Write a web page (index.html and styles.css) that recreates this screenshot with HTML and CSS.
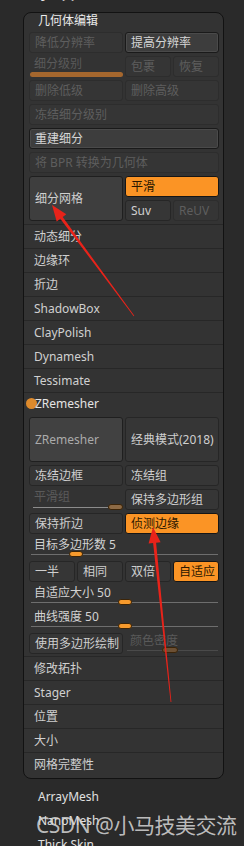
FILE: index.html
```html
<!DOCTYPE html>
<html lang="zh">
<head>
  <meta charset="UTF-8" />
  <meta name="viewport" content="width=device-width, initial-scale=1" />
  <title>几何体编辑</title>
  <link rel="stylesheet" href="styles.css">
</head>
<body>
  <div class="cut-title">子工具</div>

  <div class="panel">
    <div class="panel-title">几何体编辑</div>

    <div class="grid">
      <div class="btn off span2">降低分辨率</div>
      <div class="btn on span2">提高分辨率</div>

      <div class="slider span2">
        <span class="label off-text">细分级别</span>
        <div class="fill-bar"></div>
      </div>
      <div class="btn off">包裹</div>
      <div class="btn off">恢复</div>

      <div class="btn off span2">删除低级</div>
      <div class="btn off span2">删除高级</div>

      <div class="btn off span4">冻结细分级别</div>
      <div class="btn on span4">重建细分</div>
      <div class="btn off span4">将 BPR 转换为几何体</div>

      <div class="btn big span2">细分网格</div>
      <div class="btn orange span2">平滑</div>
      <div class="btn plain">Suv</div>
      <div class="btn off">ReUV</div>
    </div>

    <ul class="list first">
      <li>动态细分</li>
      <li>边缘环</li>
      <li>折边</li>
      <li>ShadowBox</li>
      <li>ClayPolish</li>
      <li>Dynamesh</li>
      <li>Tessimate</li>
      <li class="sub-head"><span class="dot"></span>ZRemesher</li>
    </ul>

    <div class="grid zr">
      <div class="btn big dim span2">ZRemesher</div>
      <div class="btn plain big-r span2">经典模式(2018)</div>

      <div class="btn plain span2">冻结边框</div>
      <div class="btn plain span2">冻结组</div>

      <div class="slider span2">
        <span class="label off-text">平滑组</span>
        <div class="track short"><div class="knob dull" style="left: 100%"></div></div>
      </div>
      <div class="btn plain span2">保持多边形组</div>

      <div class="btn plain span2">保持折边</div>
      <div class="btn orange span2">侦测边缘</div>

      <div class="slider span4">
        <span class="label">目标多边形数 5</span>
        <div class="track"><div class="knob" style="left: 24%"></div></div>
      </div>

      <div class="btn plain">一半</div>
      <div class="btn plain">相同</div>
      <div class="btn plain">双倍</div>
      <div class="btn orange">自适应</div>

      <div class="slider span4">
        <span class="label">自适应大小 50</span>
        <div class="track"><div class="knob" style="left: 50%"></div></div>
      </div>
      <div class="slider span4">
        <span class="label">曲线强度 50</span>
        <div class="track"><div class="knob" style="left: 50%"></div></div>
      </div>

      <div class="btn plain span2">使用多边形绘制</div>
      <div class="slider span2">
        <span class="label off-text">颜色密度</span>
        <div class="track dark"><div class="knob dark" style="left: 47%"></div></div>
      </div>
    </div>

    <ul class="list last">
      <li>修改拓扑</li>
      <li>Stager</li>
      <li>位置</li>
      <li>大小</li>
      <li>网格完整性</li>
    </ul>
  </div>

  <ul class="outside">
    <li>ArrayMesh</li>
    <li>NanoMesh</li>
    <li>Thick Skin</li>
  </ul>

  <div class="watermark">CSDN @小马技美交流</div>

  <svg class="arrows" width="244" height="846" viewBox="0 0 244 846">
    <polygon fill="#e8231a" points="52,205 56.7,221.4 60.3,218.8 133.7,316.2 134.3,315.8 62.7,217 66.3,214.3" />
    <polygon fill="#e8231a" points="153,527 148.6,543.5 153.1,543.1 170.6,702 171.4,702 156.1,542.7 160.6,542.3" />
  </svg>
</body>
</html>
```

FILE: styles.css
```css
body {
  margin: 0;
  background: #2a2a2a;
  color: #d2d2d2;
  font-family: "Noto Sans", "Noto Sans CJK SC", sans-serif;
  font-size: 12px;
  width: 244px;
  height: 846px;
  overflow: hidden;
  position: relative;
}
.cut-title {
  margin-top: -11px;
  height: 14px;
  line-height: 14px;
  padding-left: 38px;
  color: #e6e6e6;
}
.panel {
  margin: 9px 0 0 23px;
  width: 201px;
  box-sizing: border-box;
  background: #333333;
  border: 1px solid #121212;
  border-radius: 8px;
  padding-bottom: 2px;
}
.panel-title {
  height: 16px;
  line-height: 16px;
  padding-left: 14px;
  margin-bottom: 3px;
  color: #ececec;
}
.grid {
  display: grid;
  grid-template-columns: repeat(4, 46px);
  grid-auto-rows: 21px;
  gap: 3px 2px;
  padding: 0 4px 0 5px;
}
.span2 { grid-column: span 2; }
.span4 { grid-column: span 4; }
.btn {
  box-sizing: border-box;
  border-radius: 3px;
  padding-left: 5px;
  line-height: 19px;
  white-space: nowrap;
  overflow: hidden;
}
.btn.off {
  background: #353535;
  border: 1px solid #2d2d2d;
  color: #5e5e5e;
}
.btn.plain {
  background: #363636;
  border: 1px solid #262626;
  color: #cfcfcf;
}
.btn.on {
  background: #3d3d3d;
  border: 1px solid #1a1a1a;
  box-shadow: inset 0 0 0 1px #4a4a4a;
  color: #d6d6d6;
}
.btn.big {
  grid-row: span 2;
  display: flex;
  align-items: center;
  background: #3e3e3e;
  border: 1px solid #1f1f1f;
  color: #cfcfcf;
}
.btn.big.dim {
  color: #ababab;
  background: #414141;
}
.btn.big-r {
  grid-row: span 2;
  display: flex;
  align-items: center;
}
.btn.orange {
  background: #fb9425;
  border: 1px solid #161616;
  color: #2a1700;
}
.slider {
  position: relative;
}
.slider .label {
  display: block;
  padding-left: 5px;
  line-height: 15px;
}
.off-text {
  color: #5a5a5a;
}
.fill-bar {
  position: absolute;
  left: 1px;
  right: 0;
  top: 16px;
  height: 5px;
  border-radius: 3px;
  background: #a5672e;
}
.track {
  position: absolute;
  left: 2px;
  right: 1px;
  top: 17px;
  height: 1px;
  background: #6e6e6e;
}
.track.short {
  left: 4px;
  right: 15px;
  top: 18px;
  background: #8c8c8c;
}
.track.dark {
  top: 17px;
  background: #4a4a4a;
}
.knob {
  position: absolute;
  top: -3px;
  width: 14px;
  height: 6px;
  border-radius: 3px;
  background: #f79a2c;
  border: 1px solid #3b2408;
  box-sizing: border-box;
  transform: translateX(-50%);
}
.knob.dull {
  width: 15px;
  transform: none;
  background: #8d6a45;
}
.knob.dark {
  width: 16px;
  background: #6c5034;
}
.list {
  list-style: none;
  margin: 0;
  padding: 0;
}
.list li {
  height: 24px;
  line-height: 23px;
  border-top: 1px solid #272727;
  box-sizing: border-box;
  padding-left: 10px;
  color: #d0d0d0;
}
.list.first {
  margin-top: 3px;
}
.list .sub-head {
  height: 22px;
  line-height: 21px;
  padding-left: 2px;
  display: flex;
  align-items: center;
  color: #e4e4e4;
}
.dot {
  width: 11px;
  height: 11px;
  border-radius: 50%;
  background: #dd8a2c;
  margin-right: -2px;
}
.grid.zr {
  margin-top: 3px;
}
.list.last {
  margin-top: 2px;
}
.outside {
  list-style: none;
  margin: 6px 0 0;
  padding: 0 0 0 38px;
  color: #e0e0e0;
}
.outside li {
  height: 24px;
  line-height: 24px;
}
.watermark {
  position: absolute;
  left: 36px;
  top: 812px;
  font-size: 21px;
  line-height: 26px;
  letter-spacing: -0.5px;
  color: rgba(215, 215, 215, 0.85);
  white-space: nowrap;
}
.arrows {
  position: absolute;
  left: 0;
  top: 0;
}
```
